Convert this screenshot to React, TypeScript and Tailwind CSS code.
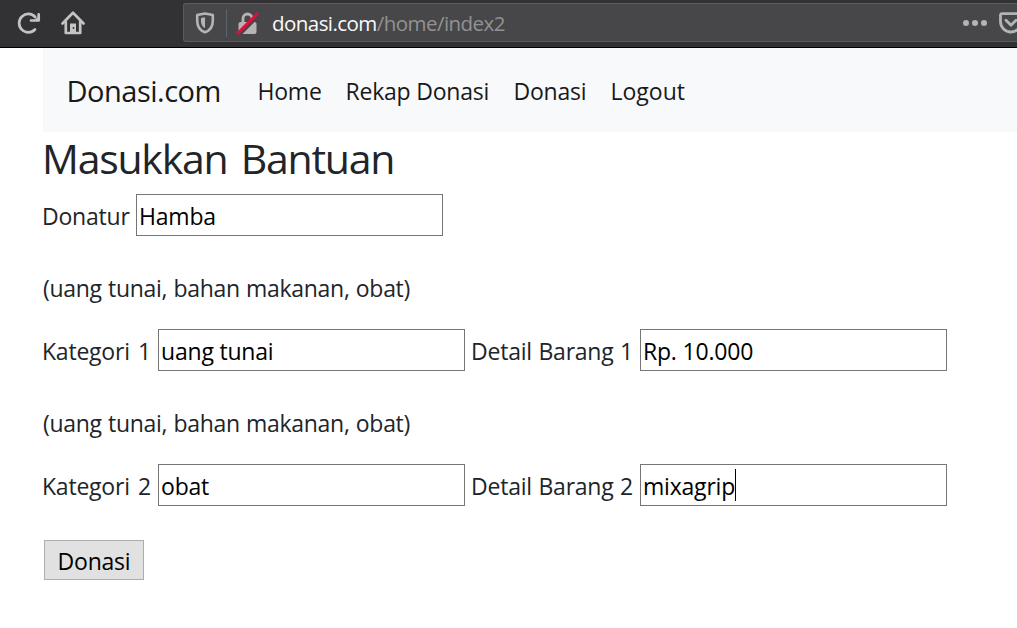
import type { ReactNode } from 'react';

function ReloadIcon() {
  return (
    <svg width="24" height="24" viewBox="0 0 24 24" fill="none" stroke="#c3c3c4" strokeWidth="2.700" strokeLinecap="round" strokeLinejoin="round">
      <path d="M18 18.500A9.200 9.200 0 1 1 18.200 6" />
      <path d="M21.700 3.400V9.500H14" />
      <path d="M22 5v5h-6z" fill="#c3c3c4" stroke="none" />
    </svg>
  );
}

function HomeIcon() {
  return (
    <svg width="24" height="24" viewBox="0 0 24 24" fill="none" stroke="#c3c3c4" strokeWidth="2.700" strokeLinecap="round" strokeLinejoin="round">
      <path d="M1.500 12.500L12 1.800l10.500 10.700" />
      <path d="M4.800 11v11h14.400V11" />
      <path d="M9 21.500v-9h6v9z" fill="#c3c3c4" stroke="none" />
      <circle cx="12.500" cy="17" r="0.900" fill="#323234" stroke="none" />
    </svg>
  );
}

function ShieldIcon() {
  return (
    <svg width="20" height="22" viewBox="0 0 20 22" fill="none">
      <path d="M10 1.500L17.800 3v6c0 5.500-2.800 9.500-7.800 11.300C5 18.500 2.200 14.500 2.200 9V3z" stroke="#b4b4b5" strokeWidth="2.600" strokeLinejoin="round" />
      <path d="M10 5.300L6 6v3.500c0 3 1.500 5.300 4 6.700z" fill="#b4b4b5" />
    </svg>
  );
}

function InsecureLockIcon() {
  return (
    <svg width="24" height="24" viewBox="0 0 24 24" fill="none">
      <path d="M7 12V7.500a4.500 4.500 0 0 1 9 0V12" stroke="#b4b4b5" strokeWidth="2.800" />
      <rect x="2.500" y="11" width="18" height="12" rx="2" fill="#b4b4b5" />
      <path d="M2.500 23.500L22.500 3.500" stroke="#474749" strokeWidth="5" />
      <path d="M2 22L21 3" stroke="#ff0039" strokeWidth="2.700" strokeLinecap="round" />
    </svg>
  );
}

function PocketIcon() {
  return (
    <svg width="24" height="22" viewBox="0 0 24 22" fill="none" stroke="#b4b4b5" strokeWidth="2.800" strokeLinecap="round" strokeLinejoin="round">
      <path d="M3 1.600h18a1.500 1.500 0 0 1 1.500 1.500V9.500a10.500 10.500 0 0 1-21 0V3.100A1.500 1.500 0 0 1 3 1.600z" />
      <path d="M7 8.300l5 4.900 5-4.900" />
    </svg>
  );
}

function BrowserBar() {
  return (
    <header className="flex h-12 items-start border-b border-black bg-[#323234]">
      <div className="flex w-[183px] shrink-0 gap-5 pt-[11px] pl-[17px]">
        <ReloadIcon />
        <HomeIcon />
      </div>
      <div className="mt-[3px] flex h-[39px] flex-1 items-center rounded-l-[3px] border border-r-0 border-[#5b5b5d] bg-[#474749] pl-[11px]">
        <ShieldIcon />
        <div className="mr-[9px] ml-[11px] h-7 w-px bg-[#5d6470]" />
        <InsecureLockIcon />
        <div className="ml-[12px] pt-px font-['Open_Sans'] text-[20.5px] leading-8 tracking-[-0.55px] whitespace-nowrap text-[#929294]">
          <span className="text-[#f9f9fa]">donasi.com</span>/home/index2
        </div>
        <div className="ml-auto flex gap-[3px]">
          <i className="size-1.5 rounded-full bg-[#b4b4b5]" />
          <i className="size-1.5 rounded-full bg-[#b4b4b5]" />
          <i className="size-1.5 rounded-full bg-[#b4b4b5]" />
        </div>
        <div className="ml-3 w-[18px] shrink-0 overflow-hidden">
          <div className="w-6">
            <PocketIcon />
          </div>
        </div>
      </div>
    </header>
  );
}

function Field({ value, focused = false }: { value: string; focused?: boolean }) {
  return (
    <div className="flex h-[42px] w-[307px] shrink-0 items-center border border-[#767676] bg-white pt-px pl-[2px] tracking-[-0.2px] text-black">
      <span>{value}</span>
      {focused && <span className="-mt-px h-8 w-px bg-black" />}
    </div>
  );
}

function Label({ className, children }: { className: string; children: ReactNode }) {
  return <label className={`shrink-0 pt-px ${className}`}>{children}</label>;
}

function Category({ index, category, detail, focused }: { index: number; category: string; detail: string; focused?: boolean }) {
  return (
    <section>
      <p className="mb-[23px] h-[35px] leading-[34px] tracking-[-0.3px] [word-spacing:0.6px]">(uang tunai, bahan makanan, obat)</p>
      <div className="flex items-center">
        <Label className="-ml-px w-[116px] [word-spacing:2.5px]">Kategori {index}</Label>
        <Field value={category} />
        <Label className="w-[175px] pl-[6px] [word-spacing:0.8px]">Detail Barang {index}</Label>
        <Field value={detail} focused={focused} />
      </div>
    </section>
  );
}

export default function App() {
  return (
    <div className="h-[628px] w-[1017px] overflow-hidden bg-white font-['Open_Sans','Noto_Sans',sans-serif] text-[23px] leading-9 tracking-[-0.22px] whitespace-nowrap text-[#212529]">
      <BrowserBar />
      <div className="pl-[43px]">
        <nav className="flex h-[84px] items-center bg-[#f8f9fb] pt-0.5 pl-[23.5px] text-[#18191a]">
          <a className="w-[191px] text-[29px] tracking-[-0.5px]">Donasi.com</a>
          <a className="w-[88px]">Home</a>
          <a className="w-[168px]">Rekap Donasi</a>
          <a className="w-[97px]">Donasi</a>
          <a className="tracking-normal">Logout</a>
        </nav>
        <h1 className="-ml-px h-[62px] text-[41px] leading-[52px] tracking-[-1.25px] [word-spacing:4px]">Masukkan Bantuan</h1>
        <form>
          <div className="mb-[35px] flex items-center">
            <Label className="-ml-px w-[94px]">Donatur</Label>
            <Field value="Hamba" />
          </div>
          <Category index={1} category="uang tunai" detail="Rp. 10.000" />
          <div className="h-[35px]" />
          <Category index={2} category="obat" detail="mixagrip" focused />
          <button type="button" className="mt-[34px] ml-px flex h-10 w-[100px] items-center justify-center border border-[#adadad] bg-[#e1e1e1] pt-px tracking-[-0.22px] text-black">
            Donasi
          </button>
        </form>
      </div>
    </div>
  );
}
